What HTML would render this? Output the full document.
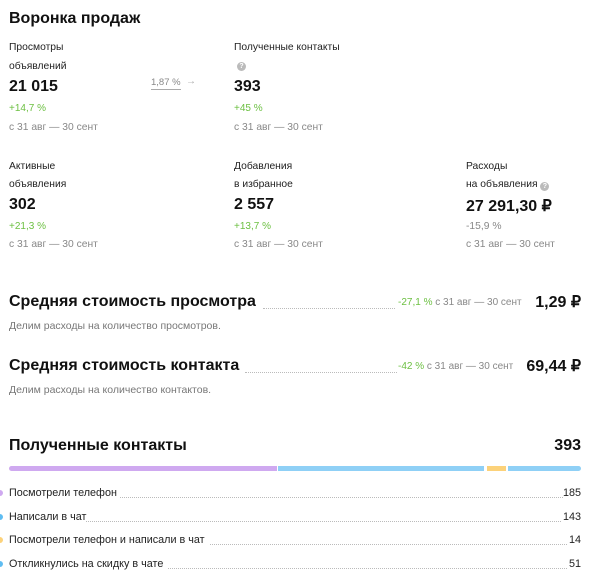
<!DOCTYPE html>
<html><head><meta charset="utf-8"><style>
*{margin:0;padding:0;box-sizing:border-box}
body{width:616px;height:581px;background:#fff;font-family:"Liberation Sans",Arial,sans-serif;color:#111;position:relative;overflow:hidden}
.a{position:absolute;white-space:nowrap}
.t{font-size:16px;font-weight:bold}
.l{font-size:10.3px;color:#222}
.v{font-size:16px;font-weight:bold}
.g{font-size:10px;color:#6dc043}
.d{font-size:10.3px;color:#888}
.h{font-size:16px;font-weight:bold}
.s{font-size:10.5px;color:#777}
.dot{position:absolute;border-bottom:1px dotted #bbb;height:1px}
.li{font-size:10.8px;color:#222}
.c{position:absolute;width:6px;height:6px;border-radius:3px;left:-3px}
</style></head><body>
<div class="a t" style="left:9px;top:10px">Воронка продаж</div>

<div class="a l" style="left:9px;top:42px">Просмотры</div>
<div class="a l" style="left:9px;top:61px">объявлений</div>
<div class="a v" style="left:9px;top:78px">21 015</div>
<div class="a g" style="left:9px;top:103px">+14,7 %</div>
<div class="a d" style="left:9px;top:122px">с 31 авг — 30 сент</div>
<div class="a" style="left:151px;top:77px;font-size:9.5px;color:#888;border-bottom:1px solid #aaa;line-height:12px">1,87 %</div>
<div class="a" style="left:186px;top:76px;font-size:10px;color:#aaa">→</div>

<div class="a l" style="left:234px;top:42px">Полученные контакты</div>
<div class="a" style="left:237px;top:62px;width:9px;height:9px;border-radius:5px;background:#bbb;color:#fff;font-size:7px;text-align:center;line-height:9px;font-weight:bold">?</div>
<div class="a v" style="left:234px;top:78px">393</div>
<div class="a g" style="left:234px;top:103px">+45 %</div>
<div class="a d" style="left:234px;top:122px">с 31 авг — 30 сент</div>

<div class="a l" style="left:9px;top:161px">Активные</div>
<div class="a l" style="left:9px;top:179px">объявления</div>
<div class="a v" style="left:9px;top:196px">302</div>
<div class="a g" style="left:9px;top:221px">+21,3 %</div>
<div class="a d" style="left:9px;top:239px">с 31 авг — 30 сент</div>

<div class="a l" style="left:234px;top:161px">Добавления</div>
<div class="a l" style="left:234px;top:179px">в избранное</div>
<div class="a v" style="left:234px;top:196px">2 557</div>
<div class="a g" style="left:234px;top:221px">+13,7 %</div>
<div class="a d" style="left:234px;top:239px">с 31 авг — 30 сент</div>

<div class="a l" style="left:466px;top:161px">Расходы</div>
<div class="a l" style="left:466px;top:179px">на объявления <span style="display:inline-block;width:9px;height:9px;border-radius:5px;background:#bbb;color:#fff;font-size:7px;text-align:center;line-height:9px;font-weight:bold;vertical-align:-1px">?</span></div>
<div class="a v" style="left:466px;top:196px">27 291,30 ₽</div>
<div class="a d" style="left:466px;top:221px">-15,9 %</div>
<div class="a d" style="left:466px;top:239px">с 31 авг — 30 сент</div>

<div class="a h" style="left:9px;top:293px">Средняя стоимость просмотра</div>
<div class="dot" style="left:263px;top:308px;width:132px"></div>
<div class="a" style="left:398px;top:297px;font-size:10px"><span style="color:#6dc043">-27,1 %</span> <span style="color:#888">с 31 авг — 30 сент</span></div>
<div class="a" style="right:35px;top:292px;font-size:16px;font-weight:bold">1,29 ₽</div>
<div class="a s" style="left:9px;top:320px">Делим расходы на количество просмотров.</div>

<div class="a h" style="left:9px;top:357px">Средняя стоимость контакта</div>
<div class="dot" style="left:245px;top:372px;width:152px"></div>
<div class="a" style="left:398px;top:361px;font-size:10px"><span style="color:#6dc043">-42 %</span> <span style="color:#888">с 31 авг — 30 сент</span></div>
<div class="a" style="right:35px;top:356px;font-size:16px;font-weight:bold">69,44 ₽</div>
<div class="a s" style="left:9px;top:384px">Делим расходы на количество контактов.</div>

<div class="a h" style="left:9px;top:437px">Полученные контакты</div>
<div class="a h" style="right:35px;top:437px">393</div>
<div class="a" style="left:9px;top:466px;width:268px;height:5px;background:#cfa9f0;border-radius:3px 0 0 3px"></div>
<div class="a" style="left:278px;top:466px;width:206px;height:5px;background:#8fd0f6"></div>
<div class="a" style="left:487px;top:466px;width:19px;height:5px;background:#fcd27a"></div>
<div class="a" style="left:508px;top:466px;width:73px;height:5px;background:#8fd0f6;border-radius:0 3px 3px 0"></div>

<div class="c" style="top:490px;background:#cfa9f0"></div>
<div class="a li" style="left:9px;top:487px">Посмотрели телефон</div>
<div class="dot" style="left:120px;top:497px;width:443px"></div>
<div class="a li" style="right:35px;top:487px">185</div>

<div class="c" style="top:514px;background:#5fbdf2"></div>
<div class="a li" style="left:9px;top:511px">Написали в чат</div>
<div class="dot" style="left:86px;top:521px;width:475px"></div>
<div class="a li" style="right:35px;top:511px">143</div>

<div class="c" style="top:537px;background:#fcd27a"></div>
<div class="a li" style="left:9px;top:534px">Посмотрели телефон и написали в чат</div>
<div class="dot" style="left:210px;top:544px;width:357px"></div>
<div class="a li" style="right:35px;top:534px">14</div>

<div class="c" style="top:561px;background:#5fbdf2"></div>
<div class="a li" style="left:9px;top:558px">Откликнулись на скидку в чате</div>
<div class="dot" style="left:168px;top:568px;width:399px"></div>
<div class="a li" style="right:35px;top:558px">51</div>
</body></html>
